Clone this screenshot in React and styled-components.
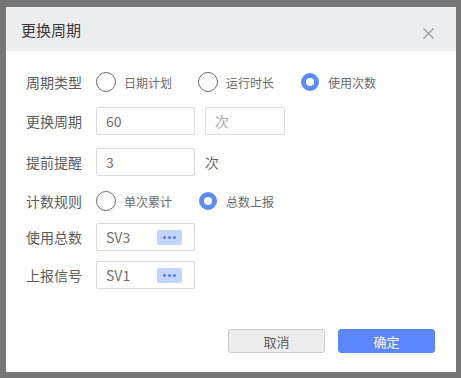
import React from 'react';
import styled, { createGlobalStyle } from 'styled-components';

const GlobalStyle = createGlobalStyle`
    html, body {
        margin: 0;
        padding: 0;
        background: #767676;
        font-family: "Noto Sans CJK SC", "Noto Sans", sans-serif;
    }
`;

const Backdrop = styled.div`
    width: 461px;
    height: 378px;
    padding: 7px 0 0 6px;
    box-sizing: border-box;
`;

const Dialog = styled.div`
    width: 450px;
    height: 365px;
    background: #fff;
    display: flex;
    flex-direction: column;
`;

const Header = styled.div`
    height: 44px;
    background: #ecedef;
    display: flex;
    align-items: center;
    justify-content: space-between;
    padding: 0 22px 0 15px;
    box-sizing: border-box;
`;

const Title = styled.span`
    font-size: 15px;
    color: #3a3a3a;
    padding-top: 1px;
`;

const Close = styled.svg`
    width: 11px;
    height: 11px;
    margin-top: 9px;
`;

const Body = styled.div`
    flex: 1;
    padding: 17px 0 0 20px;
`;

const Row = styled.div`
    display: flex;
    align-items: center;
    height: 28px;
    margin-top: ${(p) => p.$mt || 0}px;
`;

const Label = styled.span`
    width: 70px;
    font-size: 14px;
    color: #5c5c5c;
`;

const Option = styled.label`
    display: flex;
    align-items: center;
    width: 102px;
    font-size: 12px;
    color: #6a6a6a;
`;

const Circle = styled.span`
    box-sizing: border-box;
    width: ${(p) => (p.$on ? 18 : 20)}px;
    height: ${(p) => (p.$on ? 18 : 20)}px;
    margin: ${(p) => (p.$on ? '0 9px 0 1px' : '0 8px 0 0')};
    border-radius: 50%;
    border: ${(p) => (p.$on ? '5px solid #5b8cff' : '1px solid #6a6a6a')};
    background: #fff;
`;

const Input = styled.div`
    box-sizing: border-box;
    width: ${(p) => p.$w || 99}px;
    height: 28px;
    border: 1px solid #dcdcdc;
    border-radius: 2px;
    display: flex;
    align-items: center;
    justify-content: space-between;
    padding: 0 12px 0 9px;
    margin-right: 10px;
    font-size: 14px;
    color: ${(p) => (p.$placeholder ? '#a8a8a8' : '#707070')};
`;

const Unit = styled.span`
    font-size: 14px;
    color: #6a6a6a;
`;

const More = styled.span`
    width: 25px;
    height: 15px;
    background: #c3d5ff;
    border-radius: 2px;
    display: flex;
    align-items: center;
    justify-content: center;
    gap: 2px;

    i {
        width: 3px;
        height: 3px;
        border-radius: 50%;
        background: #4f7ff5;
    }
`;

const Footer = styled.div`
    display: flex;
    justify-content: flex-end;
    gap: 13px;
    padding: 0 21px 19px 0;
`;

const Button = styled.button`
    width: 97px;
    height: 24px;
    border-radius: 3px;
    font-family: inherit;
    font-size: 13px;
    padding: 0;
    border: 1px solid ${(p) => (p.$primary ? '#5b86ff' : '#cccccc')};
    background: ${(p) => (p.$primary ? '#5b86ff' : '#eeeded')};
    color: ${(p) => (p.$primary ? '#fff' : '#5c5c5c')};
`;

const Radio = ({ on, children }) => (
    <Option>
        <Circle $on={on} />
        {children}
    </Option>
);

const Picker = ({ value }) => (
    <Input>
        {value}
        <More><i /><i /><i /></More>
    </Input>
);

const App = () => {
    return (
        <Backdrop>
            <GlobalStyle />
            <Dialog>
                <Header>
                    <Title>更换周期</Title>
                    <Close viewBox="0 0 11 11">
                        <path d="M0.5 0.5 L10.5 10.5 M10.5 0.5 L0.5 10.5" stroke="#999" strokeWidth="1.1" />
                    </Close>
                </Header>
                <Body>
                    <Row>
                        <Label>周期类型</Label>
                        <Radio>日期计划</Radio>
                        <Radio>运行时长</Radio>
                        <Radio on>使用次数</Radio>
                    </Row>
                    <Row $mt={11}>
                        <Label>更换周期</Label>
                        <Input>60</Input>
                        <Input $w={80} $placeholder>次</Input>
                    </Row>
                    <Row $mt={13}>
                        <Label>提前提醒</Label>
                        <Input>3</Input>
                        <Unit>次</Unit>
                    </Row>
                    <Row $mt={11}>
                        <Label>计数规则</Label>
                        <Radio>单次累计</Radio>
                        <Radio on>总数上报</Radio>
                    </Row>
                    <Row $mt={8}>
                        <Label>使用总数</Label>
                        <Picker value="SV3" />
                    </Row>
                    <Row $mt={10}>
                        <Label>上报信号</Label>
                        <Picker value="SV1" />
                    </Row>
                </Body>
                <Footer>
                    <Button>取消</Button>
                    <Button $primary>确定</Button>
                </Footer>
            </Dialog>
        </Backdrop>
    );
};

export default App;
